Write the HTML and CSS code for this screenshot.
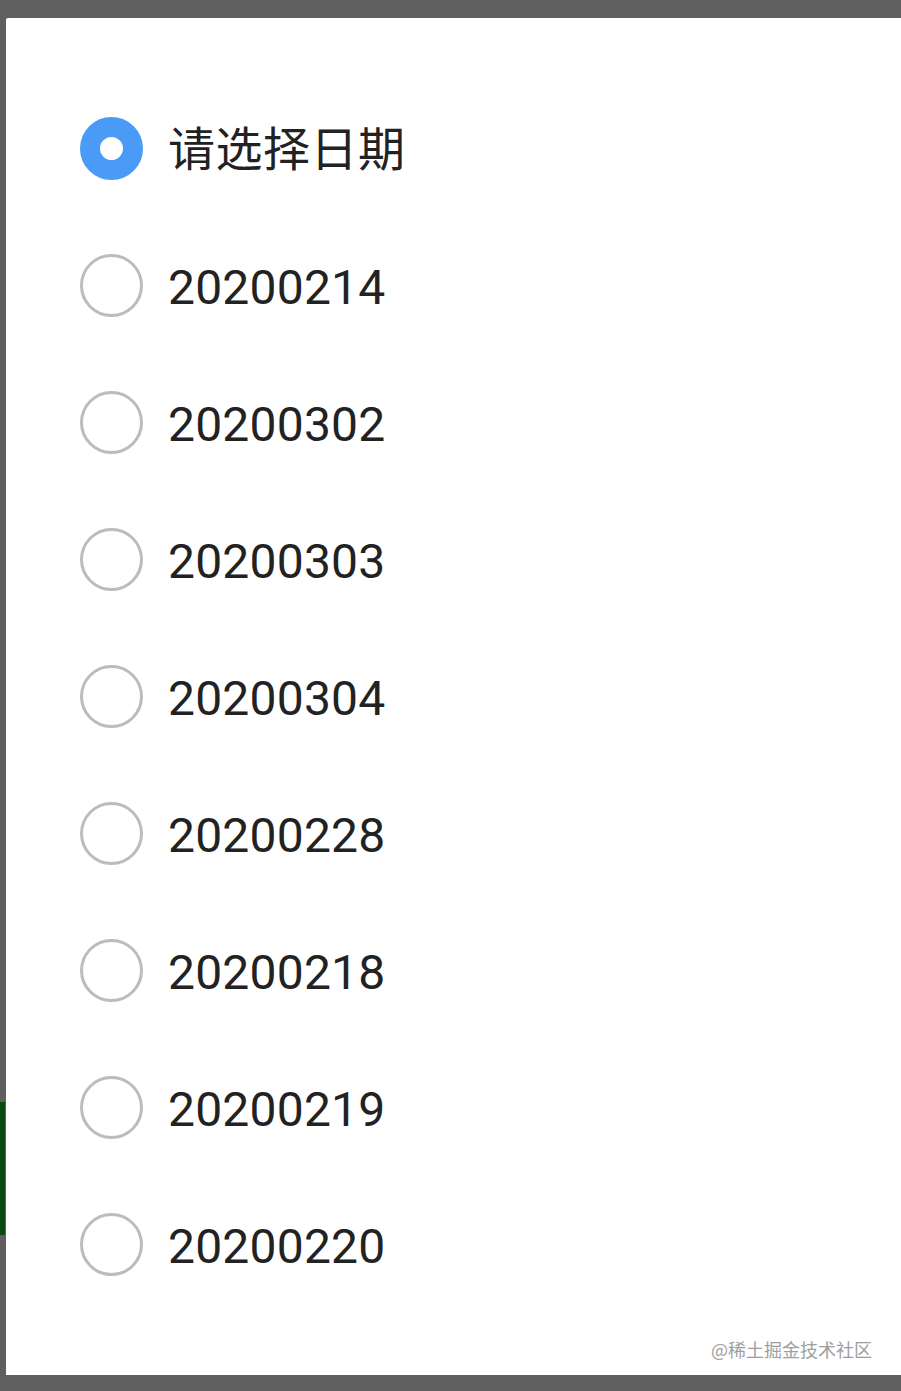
FILE: index.html
```html
<!DOCTYPE html>
<html lang="zh-CN">
  <head>
    <meta charset="UTF-8" />
    <meta name="viewport" content="width=device-width, initial-scale=1.0" />
    <title>请选择日期</title>
    <link rel="stylesheet" href="styles.css">
  </head>
  <body>
    <div class="screen">
      <div class="backdrop-edge">
        <div class="edge-green"></div>
      </div>
      <div class="dialog">
        <ul class="options">
          <li class="option checked"><span class="radio"></span><span class="label label-cjk">请选择日期</span></li>
          <li class="option"><span class="radio"></span><span class="label">20200214</span></li>
          <li class="option"><span class="radio"></span><span class="label">20200302</span></li>
          <li class="option"><span class="radio"></span><span class="label">20200303</span></li>
          <li class="option"><span class="radio"></span><span class="label">20200304</span></li>
          <li class="option"><span class="radio"></span><span class="label">20200228</span></li>
          <li class="option"><span class="radio"></span><span class="label">20200218</span></li>
          <li class="option"><span class="radio"></span><span class="label">20200219</span></li>
          <li class="option"><span class="radio"></span><span class="label">20200220</span></li>
        </ul>
        <div class="watermark">@稀土掘金技术社区</div>
      </div>
    </div>
  </body>
</html>
```

FILE: styles.css
```css
:root {
  --backdrop: #5f5f5f;
  --primary-color: #4a9bf5;
  --radio-border: #bcbcbc;
  --text-color: #222222;
  --font-family: Roboto, "Noto Sans CJK SC", sans-serif;
}

* {
  box-sizing: border-box;
}

body {
  margin: 0;
  background: var(--backdrop);
  font-family: var(--font-family);
  color: var(--text-color);
}

.screen {
  display: flex;
  height: 1391px;
  overflow: hidden;
}

.backdrop-edge {
  width: 6px;
  flex-shrink: 0;
  padding-top: 1102px;
}

.edge-green {
  width: 5px;
  height: 133px;
  background: #0b4a0c;
}

.dialog {
  flex: 1;
  display: flex;
  flex-direction: column;
  margin-top: 18px;
  height: 1357px;
  background: #ffffff;
  border-top-left-radius: 2px;
  padding: 62px 29px 13px 74px;
}

.options {
  list-style: none;
  margin: 0;
  padding: 0;
}

.option {
  display: flex;
  align-items: center;
  height: 137px;
}

.radio {
  width: 63px;
  height: 63px;
  flex-shrink: 0;
  border: 3px solid var(--radio-border);
  border-radius: 50%;
  margin-right: 25px;
}

.option.checked .radio {
  border: 20px solid var(--primary-color);
  background: #ffffff;
}

.label {
  font-size: 48px;
  line-height: 1;
  margin-top: 4px;
  letter-spacing: 0.2px;
}

.label-cjk {
  font-size: 47px;
  margin-top: 2px;
  letter-spacing: 0.5px;
}

.watermark {
  margin-top: auto;
  align-self: flex-end;
  font-size: 18px;
  color: #9e9e9e;
  font-family: "Noto Sans CJK SC", sans-serif;
}
```
